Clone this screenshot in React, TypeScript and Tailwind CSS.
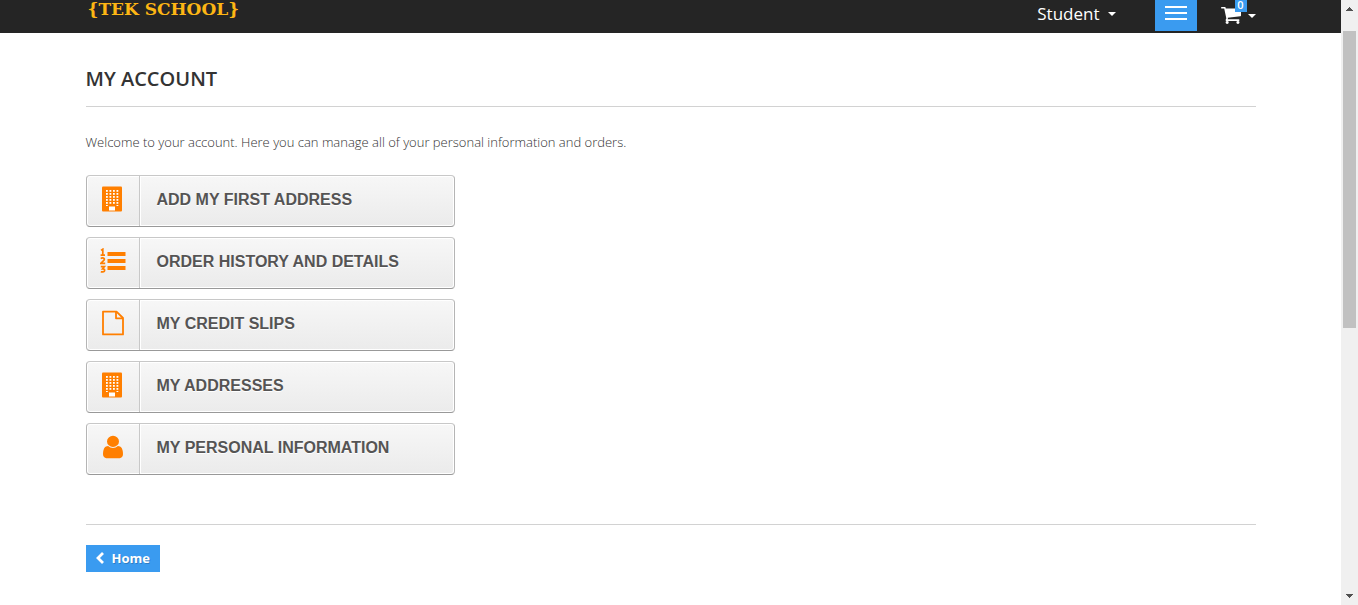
import type { ReactNode } from "react";

const CART_PATH =
  "M640 1536q0 52-38 90t-90 38-90-38-38-90 38-90 90-38 90 38 38 90zm896 0q0 52-38 90t-90 38-90-38-38-90 38-90 90-38 90 38 38 90zm128-1088v512q0 24-16.5 42.5t-40.5 21.5l-1044 122q13 60 13 70 0 16-24 64h920q26 0 45 19t19 45-19 45-45 19h-1024q-26 0-45-19t-19-45q0-11 8-31.5t16-36 21.5-40 15.5-29.5l-177-823h-204q-26 0-45-19t-19-45 19-45 45-19h256q16 0 28.5 6.5t19.5 15.5 13 24.5 8 26 5.5 29.5 4.5 26h1201q26 0 45 19t19 45z";
const USER_PATH =
  "M1536 1399q0 109-62.5 187t-150.5 78h-854q-88 0-150.5-78t-62.5-187q0-85 8.5-160.5t31.5-152 58.5-131 94-89 134.5-34.5q131 128 313 128t313-128q76 0 134.5 34.5t94 89 58.5 131 31.5 152 8.5 160.5zm-256-887q0 159-112.5 271.5t-271.5 112.5-271.5-112.5-112.5-271.5 112.5-271.5 271.5-112.5 271.5 112.5 112.5 271.5z";

function BuildingIcon() {
  const rows = [4, 7, 10, 13, 16];
  const cols = [4, 7.5, 11, 14.5];
  return (
    <svg aria-hidden="true" className="h-[26px] w-[22px]" viewBox="0 0 22 26">
      <rect y="0.5" width="20" height="25" rx="1" fill="#ff7f00" />
      {rows.map((y) =>
        cols.map((x) => <rect key={`${x}-${y}`} x={x} y={y} width="1.8" height="1.8" fill="#fff" />),
      )}
      <rect x="4" y="19" width="1.8" height="1" fill="#fff" />
      <rect x="14.5" y="19" width="1.8" height="1" fill="#fff" />
      <rect x="7" y="20.5" width="6" height="4" fill="#fff" />
    </svg>
  );
}

function ListIcon() {
  return (
    <svg aria-hidden="true" className="h-[26px] w-[26px]" viewBox="0 0 26 26" fill="none" stroke="#ff7f00">
      <path d="M7.5 6h18M7.5 13h18M7.5 20h18" strokeWidth="3.8" />
      <path d="M1 2.4l1.8-1.2V7M.6 7.2h4.4" strokeWidth="1.7" />
      <path d="M.8 10.7q1.2-1.2 2.6-.6t.7 2L1 15.3h4.2" strokeWidth="1.7" />
      <path d="M.8 18.6h3.6l-1.8 2.2q2.3 0 2 1.8t-3.8 1.2" strokeWidth="1.7" />
    </svg>
  );
}

function FileIcon() {
  return (
    <svg aria-hidden="true" className="h-[26px] w-[22px]" viewBox="0 0 22 26" fill="none" stroke="#ff7f00" strokeWidth="1.8" strokeLinejoin="round">
      <path d="M1 1.6h13.5l6.5 6.4v16.4H1z" />
      <path d="M14 1.6V8.3h7" />
    </svg>
  );
}

function UserIcon() {
  return (
    <svg aria-hidden="true" className="h-[26px] w-5" viewBox="256 0 1280 1792" preserveAspectRatio="none" fill="#ff7f00">
      <path d={USER_PATH} />
    </svg>
  );
}

function Caret() {
  return (
    <svg aria-hidden="true" className="h-1 w-2" viewBox="0 0 8 4" fill="currentColor">
      <path d="M0 0h8L4 4z" />
    </svg>
  );
}

const links: { label: string; icon: ReactNode }[] = [
  { label: "Add my first address", icon: <BuildingIcon /> },
  { label: "Order history and details", icon: <ListIcon /> },
  { label: "My credit slips", icon: <FileIcon /> },
  { label: "My addresses", icon: <BuildingIcon /> },
  { label: "My personal information", icon: <UserIcon /> },
];

function Header() {
  return (
    <header className="h-[33px] bg-[#252525] text-white">
      <div className="mx-auto flex max-w-[1170px] items-start justify-between">
        <a href="#" className="pl-0.5 font-['DejaVu_Serif','Liberation_Serif',serif] text-[17px] leading-[18px] font-bold text-[#fdb614]">
          {"{TEK SCHOOL}"}
        </a>
        <nav className="flex items-start">
          <button type="button" className="flex items-center gap-2 pt-1 text-[17px] leading-5">
            Student
            <Caret />
          </button>
          <button type="button" aria-label="Menu" className="ml-[39px] flex h-[31px] w-[42px] flex-col items-center gap-1 bg-[#3a9bf0] pt-1.5">
            <span className="h-0.5 w-[22px] bg-white" />
            <span className="h-0.5 w-[22px] bg-white" />
            <span className="h-0.5 w-[22px] bg-white" />
          </button>
          <button type="button" aria-label="Cart" className="relative ml-6 flex items-center gap-[7px] pt-[7px]">
            <svg aria-hidden="true" className="h-[17px] w-5" viewBox="0 256 1664 1408" preserveAspectRatio="none" fill="currentColor">
              <path d={CART_PATH} />
            </svg>
            <Caret />
            <span className="absolute top-0 left-3.5 h-3 w-3 bg-[#3a9bf0] text-center text-[11px] leading-[9px] font-semibold">0</span>
          </button>
        </nav>
      </div>
    </header>
  );
}

function ScrollRail() {
  return (
    <div aria-hidden="true" className="flex w-[17px] shrink-0 flex-col items-center justify-between bg-[#f0f0f0] text-[#505050]">
      <div className="flex h-full w-full flex-col items-center">
        <div className="flex h-[31px] w-full shrink-0 justify-center pt-[7px]">
          <svg className="h-1 w-[7px]" viewBox="0 0 7 4" fill="currentColor" shapeRendering="crispEdges">
            <path d="M3 0h1v1h1v1h1v1h1v1H0V3h1V2h1V1h1z" />
          </svg>
        </div>
        <div className="h-1/2 w-[13px] bg-[#c1c1c1]" />
      </div>
      <svg className="mb-[7px] h-1 w-[7px] shrink-0" viewBox="0 0 7 4" fill="currentColor" shapeRendering="crispEdges">
        <path d="M0 0h7v1H6v1H5v1H4v1H3V3H2V2H1V1H0z" />
      </svg>
    </div>
  );
}

export default function App() {
  return (
    <div className="flex h-screen overflow-hidden bg-white font-['Open_Sans','Noto_Sans',sans-serif]">
      <div className="min-w-0 flex-1">
        <Header />
        <main className="mx-auto max-w-[1170px] pt-8">
          <h1 className="border-b border-[#d2d2d2] pb-[14px] text-[20px] leading-[27px] font-semibold text-[#333] uppercase">
            My account
          </h1>
          <p className="pt-[25px] text-[13px] leading-5 font-light text-[#333]">
            Welcome to your account. Here you can manage all of your personal information and orders.
          </p>
          <ul className="mt-[23px] flex max-w-[369px] flex-col gap-2.5">
            {links.map(({ label, icon }) => (
              <li key={label}>
                <a
                  href="#"
                  className="flex h-[52px] rounded border border-t-[#c8c8c8] border-r-[#b5b5b5] border-b-[#999] border-l-[#b5b5b5] bg-linear-to-b from-[#f7f7f7] to-[#ebebeb] shadow-[inset_0_0_0_1px_#fff]"
                >
                  <span className="flex w-[53px] shrink-0 justify-center border-r border-[#c8c8c8] pt-2.5">{icon}</span>
                  <span className="flex-1 border-l border-white pt-3.5 pl-4 font-['Liberation_Sans',Arial,sans-serif] text-[16px] leading-5 font-bold text-[#555454] uppercase text-shadow-[0_1px_0_#fff]">
                    {label}
                  </span>
                </a>
              </li>
            ))}
          </ul>
          <div className="mt-[49px] border-t border-[#d2d2d2] pt-5">
            <a
              href="#"
              className="inline-flex h-[27px] items-center gap-2 bg-[#3a9bf0] px-2.5 pb-0.5 text-[13px] leading-4 font-bold text-white text-shadow-[1px_1px_0_#0003]"
            >
              <svg aria-hidden="true" className="h-3 w-2" viewBox="0 0 8 12" fill="none" stroke="currentColor" strokeWidth="2.8">
                <path d="M7 1L2 6l5 5" />
              </svg>
              Home
            </a>
          </div>
        </main>
      </div>
      <ScrollRail />
    </div>
  );
}
